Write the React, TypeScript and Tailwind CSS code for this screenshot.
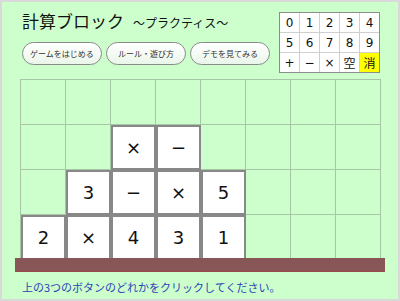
const jp = "font-['Noto_Sans_CJK_JP',sans-serif]";

const keys = ["0", "1", "2", "3", "4", "5", "6", "7", "8", "9", "+", "−", "×", "空", "消"];

// board rows, top to bottom; "" is an empty cell
const board = [
  ["", "", "", "", "", "", "", ""],
  ["", "", "×", "−", "", "", "", ""],
  ["", "3", "−", "×", "5", "", "", ""],
  ["2", "×", "4", "3", "1", "", "", ""],
];

const buttons = ["ゲームをはじめる", "ルール・遊び方", "デモを見てみる"];

function Keypad() {
  return (
    <div className="self-start mt-[10px] border border-[#8c8c8c] bg-[#cfcfcf]">
      <div className="grid grid-cols-[repeat(5,19px)] grid-rows-[repeat(3,19px)] gap-px">
        {keys.map((k) => (
          <div
            key={k}
            className={`flex items-center justify-center text-[12px] text-[#111] ${
              k === "消" ? "bg-[#ffff00]" : "bg-white"
            } ${/[0-9+−×]/.test(k) ? "font-['DejaVu_Sans',sans-serif]" : jp}`}>
            {k}
          </div>
        ))}
      </div>
    </div>
  );
}

export default function App() {
  return (
    <div className="w-[400px] h-[301px] border-2 border-[#d9d9d9] bg-[#ccffcc] flex flex-col overflow-hidden">
      <div className="flex justify-between pl-[20px] pr-[18px] h-[77px]">
        <div className="flex flex-col">
          <div className={`pt-[9px] flex items-end gap-[9px] leading-[20px] text-[#111] ${jp}`}>
            <span className="text-[17px]">計算ブロック</span>
            <span className="text-[12px] leading-[17px]">～プラクティス～</span>
          </div>
          <div className="mt-[11px] flex gap-[4px]">
            {buttons.map((b) => (
              <button
                key={b}
                className={`w-[80px] h-[23px] rounded-full border border-[#8a8a8a] bg-gradient-to-b from-white to-[#eaf6ea] text-[8px] text-[#333] ${jp}`}>
                {b}
              </button>
            ))}
          </div>
        </div>
        <Keypad />
      </div>

      <div className="ml-[18px] w-[361px] border-l border-t border-[#a6c6a6]">
        {board.map((row, r) => (
          <div key={r} className="flex">
            {row.map((c, i) =>
              c ? (
                <div
                  key={i}
                  className="w-[45px] h-[45px] bg-white border-2 border-[#888] flex items-center justify-center text-[18px] text-[#111] font-['DejaVu_Sans',sans-serif]">
                  {c}
                </div>
              ) : (
                <div key={i} className="w-[45px] h-[45px] border-r border-b border-[#a6c6a6]" />
              )
            )}
          </div>
        ))}
      </div>

      <div className="-mt-[2px] ml-[13px] w-[370px] h-[14px] bg-[#885656] border-b border-[#a04848]" />

      <p className={`mt-[8px] pl-[20px] text-[11px] leading-[14px] text-[#2f3fb8] ${jp}`}>
        上の3つのボタンのどれかをクリックしてください。
      </p>
    </div>
  );
}
